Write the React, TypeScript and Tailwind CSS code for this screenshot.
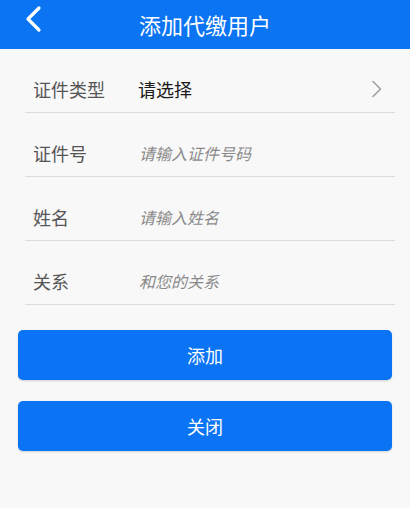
import React from "react";

const font = { fontFamily: '"Noto Sans CJK SC", "Noto Sans", sans-serif' };

function Row({ label, value, placeholder, arrow }: { label: string; value?: string; placeholder?: string; arrow?: boolean }) {
  return (
    <div className="flex h-16 items-center border-b border-[#dcdcdc] pl-[8px] pr-[12px] pt-[17px]">
      <div className="w-[105px] text-[18px] text-[#555555]">{label}</div>
      {value ? (
        <div className="flex-1 text-[18px] text-[#1a1a1a]">{value}</div>
      ) : (
        <div className="flex-1 pl-[1px] text-[16px] italic text-[#8a8a8a]">{placeholder}</div>
      )}
      {arrow && (
        <svg width="12" height="18" viewBox="0 0 12 18" fill="none">
          <path d="M2 1.5 L9.5 9 L2 16.5" stroke="#a0a0a0" strokeWidth="1.6" strokeLinecap="round" strokeLinejoin="round" />
        </svg>
      )}
    </div>
  );
}

export default function App() {
  return (
    <div className="flex h-[508px] w-[410px] flex-col bg-[#f8f8f8]" style={font}>
      <div className="relative flex h-[49px] items-center justify-center bg-[#0a74f2]">
        <svg className="absolute left-[23px] top-[5px]" width="20" height="28" viewBox="0 0 20 28" fill="none">
          <path d="M16 3 L5 14 L16 25" stroke="#ffffff" strokeWidth="3.2" strokeLinecap="round" strokeLinejoin="round" />
        </svg>
        <div className="text-[22px] text-white">添加代缴用户</div>
      </div>
      <div className="ml-[25px] mr-[15px]">
        <Row label="证件类型" value="请选择" arrow />
        <Row label="证件号" placeholder="请输入证件号码" />
        <Row label="姓名" placeholder="请输入姓名" />
        <Row label="关系" placeholder="和您的关系" />
      </div>
      <div className="mx-[18px] mt-[25px] flex flex-col gap-[21px]">
        <button className="flex h-[50px] items-center justify-center rounded-[5px] bg-[#0a74f5] text-[18px] text-white shadow-[0_1px_2px_rgba(0,0,0,0.15)]">添加</button>
        <button className="flex h-[50px] items-center justify-center rounded-[5px] bg-[#0a74f5] text-[18px] text-white shadow-[0_1px_2px_rgba(0,0,0,0.15)]">关闭</button>
      </div>
    </div>
  );
}
